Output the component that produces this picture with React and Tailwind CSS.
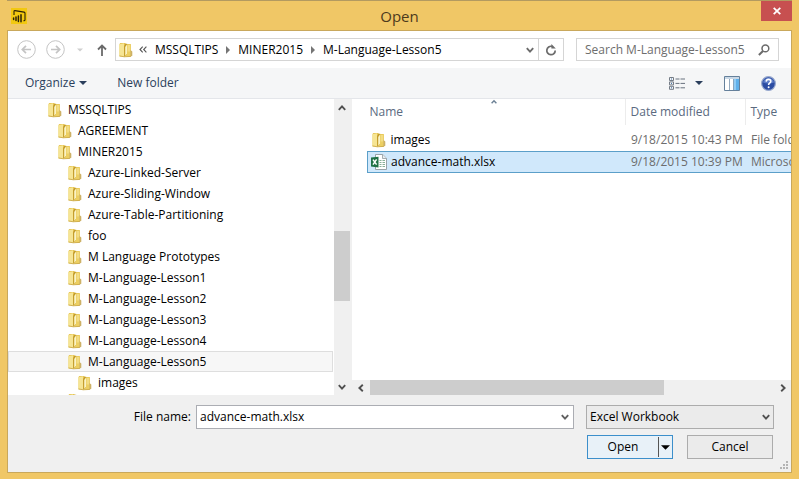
import { useState } from "react";
import { clsx } from "clsx";

const FOLDERS = [
  { name: "MSSQLTIPS", level: 0 },
  { name: "AGREEMENT", level: 1 },
  { name: "MINER2015", level: 1 },
  { name: "Azure-Linked-Server", level: 2 },
  { name: "Azure-Sliding-Window", level: 2 },
  { name: "Azure-Table-Partitioning", level: 2 },
  { name: "foo", level: 2 },
  { name: "M Language Prototypes", level: 2 },
  { name: "M-Language-Lesson1", level: 2 },
  { name: "M-Language-Lesson2", level: 2 },
  { name: "M-Language-Lesson3", level: 2 },
  { name: "M-Language-Lesson4", level: 2 },
  { name: "M-Language-Lesson5", level: 2 },
  { name: "images", level: 3 },
];

const INDENT = ["pl-[38px]", "pl-12", "pl-[58px]", "pl-[68px]"];

const FILES = [
  { name: "images", modified: "9/18/2015 10:43 PM", type: "File folder", kind: "folder" },
  { name: "advance-math.xlsx", modified: "9/18/2015 10:39 PM", type: "Microsoft Excel Worksheet", kind: "excel" },
];

const PATH = ["MSSQLTIPS", "MINER2015", "M-Language-Lesson5"];

function FolderIcon() {
  return (
    <svg viewBox="0 0 16 16" className="h-4 w-4 shrink-0" aria-hidden="true">
      <path d="M1.500 2 2.300 1h4.900l.8 1H12.800v12.500H1.500z" fill="#e6c555" />
      <path d="M1.500 2.200 6 1.300v13.400l-4.500-.9z" fill="#f6e594" />
      <path d="M6 4.200 7.400 1.800h1.800v9.700L6.200 15z" fill="#c39c2c" />
      <path d="M7.200 5 9 2.600v9.200l-1.800 2z" fill="#fbf3c4" />
      <path d="M9 2.400H12.800v12.100H7.400L9 12z" fill="#eccf62" />
      <path d="M9.600 3h2.500v6.500H9.600z" fill="#f3dd84" />
      <path d="M12.400 8 14.300 9.600v4.200l-1.900 1z" fill="#cdb166" />
      <path d="m1.500 13.900 4.700.9 6.600-.4" fill="none" stroke="#c9a640" strokeWidth=".8" />
    </svg>
  );
}

function ExcelIcon() {
  return (
    <svg viewBox="0 0 16 16" className="h-4 w-4 shrink-0" aria-hidden="true">
      <path d="M4.500.500h7.200l3.800 3.800v11.200h-11z" fill="#fff" stroke="#8f9a9f" strokeWidth=".9" />
      <path d="M11.500.5v4h4" fill="#e9edef" stroke="#8f9a9f" strokeWidth=".8" />
      <path d="M8.500 6.500h2M11.500 6.500h2.500M8.500 8.500h2M11.500 8.500h2.500M8.500 10.500h2M11.500 10.500h2.500M8.500 12.500h2M11.500 12.500h2.500" stroke="#7ba78d" strokeWidth=".9" />
      <path d="M0 3.600 7.500 2.800v10.600L0 12.600z" fill="#1f7145" />
      <path d="m2 5.600 3.600 5M5.600 5.400 2 10.700" stroke="#fff" strokeWidth="1.500" />
    </svg>
  );
}

function PowerBiIcon() {
  return (
    <svg viewBox="0 0 16 16" className="h-4 w-4" aria-hidden="true">
      <path d="M0 0h16v16H0z" fill="#f2c811" />
      <path d="M3 7V3.500q0-1 1-.9l9 1.500q1 .2 1 1.200v6.500q0 1-1 1h-.6" fill="none" stroke="#2b2108" strokeWidth="1.100" />
      <path d="M2.600 10v1.600M5 9v3.600M7.400 8v5.400M10 6.800v7" stroke="#2b2108" strokeWidth="1.500" strokeLinecap="round" />
    </svg>
  );
}

function Chevron({ className }) {
  return (
    <svg viewBox="0 0 8 8" className={clsx("h-2 w-2", className)} aria-hidden="true">
      <path d="m.8 2.200 3.200 3.400 3.200-3.400" fill="none" stroke="currentColor" strokeWidth="1.900" />
    </svg>
  );
}

function Caret({ className }) {
  return (
    <svg viewBox="0 0 8 4" className={clsx("h-1 w-2", className)} aria-hidden="true">
      <path d="M0 0h8L4 4z" fill="currentColor" />
    </svg>
  );
}

function HistoryArrow({ label, d }) {
  return (
    <button type="button" aria-label={label} className="text-[#c4c4c4]">
      <svg viewBox="0 0 19 19" className="h-[19px] w-[19px]" fill="none" stroke="currentColor">
        <circle cx="9.500" cy="9.500" r="8.800" />
        <path d={d} strokeWidth="1.700" />
      </svg>
    </button>
  );
}

function TitleBar() {
  return (
    <header className="grid h-[30px] shrink-0 grid-cols-[1fr_auto_1fr] border-t border-[#b39a60]">
      <div className="self-center pl-1">
        <PowerBiIcon />
      </div>
      <h1 className="self-center text-[15px] leading-5 text-[#4c3a1c]">Open</h1>
      <button
        type="button"
        aria-label="Close"
        className="flex h-5 w-[31px] items-center justify-center justify-self-end bg-[#c75050]"
      >
        <svg viewBox="0 0 8 8" className="h-2 w-2">
          <path d="m.7.9 6.600 6.200M7.300.9.7 7.100" stroke="#fff" strokeWidth="1.800" />
        </svg>
      </button>
    </header>
  );
}

function NavBar() {
  return (
    <nav className="flex h-[37px] shrink-0 items-center pr-3 pl-[9px]">
      <div className="flex w-[98px] items-center">
        <HistoryArrow label="Back" d="M14 9.500H5.500M9 5.800 5.300 9.500 9 13.200" />
        <span className="w-[10px]" />
        <HistoryArrow label="Forward" d="M5 9.500h8.500M10 5.800l3.700 3.700-3.700 3.700" />
        <button type="button" aria-label="Recent locations" className="ml-3 text-[#cfcfcf]">
          <Caret className="w-[6px]" />
        </button>
        <button type="button" aria-label="Up" className="ml-[14px] text-[#6a6a6a]">
          <svg viewBox="0 0 10 12" className="h-3 w-[10px]" fill="none" stroke="currentColor" strokeWidth="1.800">
            <path d="M5 12V1.500M1 5.500l4-4 4 4" />
          </svg>
        </button>
      </div>

      <div className="flex h-[23px] min-w-0 flex-1 border border-[#d5d5d5]">
        <div className="flex min-w-0 flex-1 items-center overflow-hidden pl-[2px]">
          <FolderIcon />
          <svg viewBox="0 0 8 7" className="mr-2 ml-[5px] h-[7px] w-2" fill="none" stroke="#555" aria-hidden="true">
            <path d="M3.700.7 1 3.500l2.700 2.800M7.400.7 4.700 3.500l2.700 2.800" strokeWidth="1.100" />
          </svg>
          {PATH.map((part, i) => (
            <div key={part} className="flex items-center whitespace-nowrap">
              {i > 0 && (
                <svg viewBox="0 0 4 8" className="mx-2 h-2 w-1" aria-hidden="true">
                  <path d="M0 0v8l4-4z" fill="#757575" />
                </svg>
              )}
              <a href="#" className="text-black">{part}</a>
            </div>
          ))}
        </div>
        <button type="button" aria-label="Previous locations" className="flex w-4 items-center justify-center text-[#6b6b6b]">
          <Chevron />
        </button>
        <button type="button" aria-label="Refresh" className="flex w-[25px] items-center justify-center border-l border-[#d5d5d5] text-[#6b6b6b]">
          <svg viewBox="0 0 12 12" className="h-3 w-3" fill="none" stroke="currentColor">
            <path d="M7 2.400A4.200 4.200 0 1 0 10.200 6.400" strokeWidth="1.700" />
            <path d="M6.400 0v4.600h4.400z" fill="currentColor" stroke="none" />
          </svg>
        </button>
      </div>

      <div className="ml-3 flex h-[23px] w-[203px] items-center border border-[#d5d5d5] px-2">
        <input
          type="search"
          aria-label="Search"
          placeholder="Search M-Language-Lesson5"
          className="min-w-0 flex-1 outline-none placeholder:text-[#6d6d6d]"
        />
        <svg viewBox="0 0 12 12" className="h-3 w-3 shrink-0" fill="none" stroke="#6b6b6b" aria-hidden="true">
          <circle cx="7.400" cy="4.400" r="3.400" strokeWidth="1.500" />
          <path d="M5 7 .9 11" strokeWidth="2" />
        </svg>
      </div>
    </nav>
  );
}

function Toolbar() {
  return (
    <div className="flex h-[31px] shrink-0 items-center border-b border-[#e4e6ea] bg-[#f5f6f7] pr-[15px] pl-[17px] text-[#2b3f5c]">
      <button type="button" className="flex items-center gap-1">
        Organize <Caret />
      </button>
      <button type="button" className="ml-[30px]">New folder</button>
      <div className="ml-auto flex items-center">
        <button type="button" aria-label="Change your view" className="flex items-center gap-[10px]">
          <svg viewBox="0 0 16 13" className="h-[13px] w-4" fill="none">
            <path d="M.5.5h4v3h-4zM.5 4.900h4v3h-4zM.5 9.300h4v3h-4z" stroke="#747c86" />
            <path d="M2 2h1M2 6.400h1M2 10.800h1" stroke="#3a6ea5" />
            <path d="M6.500 2h4M11.500 2H16M6.500 6.400h4M11.500 6.400H16M6.500 10.800h4M11.500 10.800H16" stroke="#68727e" />
          </svg>
          <Caret />
        </button>
        <button type="button" aria-label="Show the preview pane" className="ml-[21px]">
          <svg viewBox="0 0 16 15" className="h-[15px] w-4">
            <path d="M.5.5h15v14H.5z" fill="#fff" stroke="#65809b" />
            <path d="M1 1h14v2H1z" fill="#c9d8e6" />
            <path d="M9.500 3h5.500v11H9.500z" fill="#8fcbf5" />
            <path d="M12 3h3v11h-3z" fill="#5fb0ea" />
            <path d="M5.500 3v11M9.500 3v11" stroke="#7a94ad" strokeWidth=".8" />
          </svg>
        </button>
        <button type="button" aria-label="Get help" className="ml-[21px]">
          <svg viewBox="0 0 15 15" className="h-[15px] w-[15px]">
            <circle cx="7.500" cy="7.500" r="6.900" fill="#2c4da3" stroke="#9aabcf" strokeWidth="1.200" />
            <path d="M2 6.500a5.600 5.600 0 0 1 11 0Q7.500 8.500 2 6.500z" fill="#5d7dc8" />
            <path d="M5.200 5.600q.1-2.200 2.300-2.200 2.300 0 2.300 1.900 0 1.100-1.200 1.800-1 .6-1 1.800" fill="none" stroke="#fff" strokeWidth="1.600" />
            <circle cx="7.600" cy="11.200" r="1" fill="#fff" />
          </svg>
        </button>
      </div>
    </div>
  );
}

function FolderTree({ current, onSelect }) {
  return (
    <div className="flex w-[342px] shrink-0 overflow-hidden">
      <ul className="min-w-0 flex-1 overflow-hidden pr-px">
        {FOLDERS.map((folder) => (
          <li key={folder.name}>
            <button
              type="button"
              onClick={() => onSelect(folder.name)}
              className={clsx(
                "flex h-[21px] w-full items-center gap-[5px] border text-left text-black",
                INDENT[folder.level],
                folder.name === current ? "border-[#dedede] bg-[#f7f7f7]" : "border-transparent"
              )}
            >
              <FolderIcon />
              {folder.name}
            </button>
          </li>
        ))}
        <li className="pl-[59px]">
          <FolderIcon />
        </li>
      </ul>
      <div className="flex w-4 shrink-0 flex-col items-center bg-[#f0f0f0] text-[#505050]">
        <button type="button" aria-label="Scroll up" className="flex h-[17px] items-center">
          <Chevron className="rotate-180" />
        </button>
        <div className="flex w-full flex-1 flex-col">
          <div className="flex-[115]" />
          <div className="flex-[71] bg-[#cdcdcd]" />
          <div className="flex-[77]" />
        </div>
        <button type="button" aria-label="Scroll down" className="flex h-[17px] items-center">
          <Chevron />
        </button>
      </div>
    </div>
  );
}

function FileList({ selected, onSelect }) {
  return (
    <div className="flex min-w-0 flex-1 flex-col border-l-2 border-[#f0f0f0]">
      <div className="relative min-h-0 flex-1 overflow-hidden pl-[15px]">
        <Chevron className="absolute top-0 left-[138px] h-[6px] rotate-180 text-[#6d8296]" />
        <table className="w-full table-fixed border-collapse text-left whitespace-nowrap">
          <thead>
            <tr className="h-[26px] text-[#5a6a80]">
              <th className="pl-[2px] font-normal">Name</th>
              <th className="w-[120px] border-l border-[#ececec] pl-[5px] font-normal">Date modified</th>
              <th className="w-[46px] overflow-hidden border-l border-[#ececec] pl-[5px] font-normal">Type</th>
            </tr>
          </thead>
          <tbody className="text-[#6d6d6d]">
            <tr className="h-[5px]" />
            {FILES.map((file) => (
              <tr
                key={file.name}
                onClick={() => onSelect(file.name)}
                className={clsx(
                  "h-[21px]",
                  file.name === selected && "border border-r-0 border-[#5b9fc9] bg-[#d0e8fb]"
                )}
              >
                <td className="pl-[3px] text-black">
                  <div className="flex items-center gap-1">
                    {file.kind === "folder" ? <FolderIcon /> : <ExcelIcon />}
                    {file.name}
                  </div>
                </td>
                <td className="pl-[6px]">{file.modified}</td>
                <td className="overflow-hidden pl-[6px]">{file.type}</td>
              </tr>
            ))}
          </tbody>
        </table>
      </div>
      <div className="flex h-[15px] shrink-0 items-center bg-[#f0f0f0] text-[#505050]">
        <button type="button" aria-label="Scroll left" className="flex w-[18px] justify-center">
          <Chevron className="rotate-90" />
        </button>
        <div className="flex h-full flex-1">
          <div className="flex-[294] bg-[#cdcdcd]" />
          <div className="flex-[110]" />
        </div>
        <button type="button" aria-label="Scroll right" className="flex w-[17px] justify-center">
          <Chevron className="-rotate-90" />
        </button>
      </div>
    </div>
  );
}

function Footer({ fileName, onChange }) {
  return (
    <form
      onSubmit={(e) => e.preventDefault()}
      className="relative flex h-[77px] shrink-0 flex-col gap-[6px] bg-[#f0f0f0] pt-[10px] pr-[17px] text-black"
    >
      <div className="flex items-center">
        <label htmlFor="file-name" className="w-[188px] pr-[5px] text-right">File name:</label>
        <div className="flex h-6 min-w-0 flex-1 items-center border border-[#abadb3] bg-white pr-1">
          <input
            id="file-name"
            value={fileName}
            onChange={(e) => onChange(e.target.value)}
            className="min-w-0 flex-1 pl-[3px] outline-none"
          />
          <button type="button" aria-label="Previous file names" className="text-[#606060]">
            <Chevron />
          </button>
        </div>
        <div className="relative ml-3 w-[188px]">
          <select aria-label="File type" className="block h-6 w-full appearance-none border border-[#acacac] bg-[#ebebeb] pl-[3px]">
            <option>Excel Workbook</option>
          </select>
          <Chevron className="pointer-events-none absolute top-2 right-1 text-[#505050]" />
        </div>
      </div>
      <div className="flex justify-end gap-[14px] pr-px">
        <div className="flex h-6 w-[86px] items-center border border-[#3c8fcb] bg-[#e8f1f8]">
          <button type="submit" className="flex-1">Open</button>
          <button type="button" aria-label="More open options" className="flex h-5 w-[14px] items-center justify-center border-l border-[#555]">
            <Caret className="h-[5px] w-[9px]" />
          </button>
        </div>
        <button type="button" className="h-6 w-[86px] border border-[#acacac] bg-[#ebebeb]">Cancel</button>
      </div>
      <svg viewBox="0 0 8 8" className="absolute right-[3px] bottom-[3px] h-2 w-2" fill="#b4b4b4" aria-hidden="true">
        <path d="M6 0h2v2H6zM3 3h2v2H3zM6 3h2v2H6zM0 6h2v2H0zM3 6h2v2H3zM6 6h2v2H6z" />
      </svg>
    </form>
  );
}

export default function App() {
  const [folder, setFolder] = useState("M-Language-Lesson5");
  const [fileName, setFileName] = useState("advance-math.xlsx");

  return (
    <div className="flex h-screen flex-col bg-[#f0c766] px-[7px] pb-[6px] font-['Open_Sans','Noto_Sans',sans-serif] text-[12px] leading-4">
      <TitleBar />
      <main className="flex min-h-0 flex-1 flex-col border border-[#c9a85c] bg-white">
        <NavBar />
        <Toolbar />
        <div className="flex min-h-0 flex-1">
          <FolderTree current={folder} onSelect={setFolder} />
          <FileList selected={fileName} onSelect={setFileName} />
        </div>
        <Footer fileName={fileName} onChange={setFileName} />
      </main>
    </div>
  );
}
